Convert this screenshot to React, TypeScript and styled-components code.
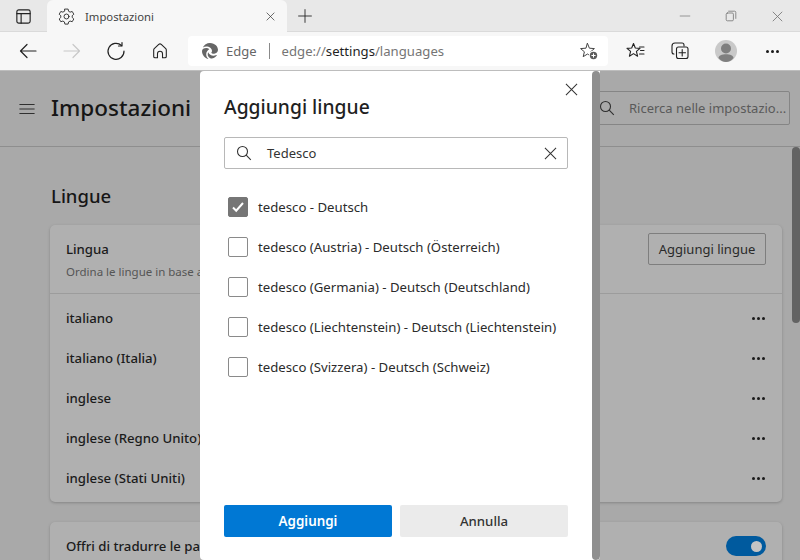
import React from 'react';
import styled, { createGlobalStyle } from 'styled-components';
import { FaEdge } from 'react-icons/fa6';

const FONT = '"Noto Sans", "Open Sans", sans-serif';

const GlobalStyle = createGlobalStyle`
  html, body {
    margin: 0;
    padding: 0;
    width: 800px;
    height: 560px;
    overflow: hidden;
    font-family: ${FONT};
    color: #1f1f1f;
  }
  * {
    box-sizing: border-box;
  }
`;

const Browser = styled.div`
  width: 800px;
  height: 560px;
  display: flex;
  flex-direction: column;
  overflow: hidden;
`;

const TabStrip = styled.div`
  height: 32px;
  flex: none;
  background: #e8e8e8;
  box-shadow: inset 0 -1px 0 #dadada;
  display: flex;
  align-items: flex-end;
`;

const TabToggle = styled.div`
  width: 47px;
  height: 32px;
  display: flex;
  align-items: center;
  justify-content: center;
`;

const Tab = styled.div`
  width: 240px;
  height: 32px;
  background: #f7f7f7;
  border-radius: 6px 6px 0 0;
  display: flex;
  align-items: center;
  padding: 0 12px 0 10px;
  gap: 9px;
`;

const TabTitle = styled.span`
  flex: 1;
  font-size: 11.3px;
  color: #444;
`;

const NewTab = styled.div`
  width: 36px;
  height: 32px;
  display: flex;
  align-items: center;
  justify-content: center;
`;

const WindowControls = styled.div`
  margin-left: auto;
  height: 32px;
  display: flex;
  align-items: center;
`;

const WindowButton = styled.div`
  width: 46px;
  display: flex;
  justify-content: center;
`;

const Toolbar = styled.div`
  height: 39px;
  flex: none;
  background: #f7f7f7;
  border-bottom: 1px solid #bdbdbd;
  display: flex;
  align-items: center;
  padding-left: 6px;
`;

const ToolButton = styled.div<{ $width?: number }>`
  width: ${({ $width }) => $width ?? 44}px;
  height: 30px;
  flex: none;
  display: flex;
  align-items: center;
  justify-content: center;
`;

const AddressBar = styled.div`
  width: 420px;
  height: 30px;
  margin: 0 6px;
  flex: none;
  background: #fff;
  border-radius: 4px;
  display: flex;
  align-items: center;
  padding: 0 9px 0 14px;
  color: #666;
`;

const SiteName = styled.span`
  font-size: 13px;
  color: #666;
  margin-left: 8px;
`;

const Divider = styled.span`
  width: 1px;
  height: 16px;
  background: #8a8a8a;
  margin: 0 12px 0 12px;
`;

const Url = styled.span`
  flex: 1;
  font-size: 13.15px;
  color: #757575;
  b {
    font-weight: 400;
    color: #1f1f1f;
  }
`;

const Page = styled.div`
  position: relative;
  flex: 1;
  background: #a9a9a9;
  overflow: hidden;
`;

const PageHeader = styled.header`
  height: 76px;
  border-bottom: 1px solid #8e8e8e;
  display: flex;
  align-items: center;
  padding: 0 10px 0 18px;
`;

const PageTitle = styled.h1`
  margin: 0 0 3px 15px;
  font-size: 22.5px;
  font-weight: 500;
  color: #161616;
`;

const SettingsSearch = styled.div`
  margin: 0 0 2px auto;
  width: 192px;
  height: 34px;
  border: 1px solid #858585;
  border-radius: 2px;
  display: flex;
  align-items: center;
  gap: 14px;
  font-size: 13px;
  color: #5a5a5a;
  white-space: nowrap;
`;

const Content = styled.main`
  padding: 35px 18px 0 50px;
`;

const SectionTitle = styled.h2`
  margin: 0 0 15px 1px;
  font-size: 18.5px;
  line-height: 28px;
  font-weight: 500;
  color: #161616;
`;

const Card = styled.section`
  background: #b0b0b0;
  border-radius: 5px;
  box-shadow: 0 1px 3px rgba(0, 0, 0, 0.22);
  margin-bottom: 20px;
`;

const CardHead = styled.div`
  height: 69px;
  border-bottom: 1px solid #9c9c9c;
  display: flex;
  align-items: flex-start;
  justify-content: space-between;
  padding: 8px 16px 0;
`;

const CardHeadText = styled.div`
  padding-top: 6px;
`;

const CardTitle = styled.div`
  font-size: 13.2px;
  line-height: 20px;
  font-weight: 500;
  color: #1b1b1b;
`;

const CardHint = styled.div`
  font-size: 11.5px;
  line-height: 16px;
  margin-top: 5px;
  color: #555;
`;

const OutlineButton = styled.div`
  width: 118px;
  height: 32px;
  border: 1px solid #7e7e7e;
  border-radius: 2px;
  font-size: 13px;
  line-height: 30px;
  text-align: center;
  color: #2a2a2a;
`;

const LangList = styled.div`
  padding: 4px 0;
`;

const LangRow = styled.div`
  height: 40px;
  display: flex;
  align-items: center;
  justify-content: space-between;
  padding: 0 17px 0 16px;
  font-size: 13.2px;
  font-weight: 500;
  color: #1b1b1b;
`;

const Dots = styled.span`
  display: flex;
  gap: 2px;
  i {
    width: 3px;
    height: 3px;
    border-radius: 50%;
    background: #1a1a1a;
  }
`;

const ToggleRow = styled.div`
  height: 60px;
  display: flex;
  align-items: flex-start;
  justify-content: space-between;
  padding: 14px 16px;
  font-size: 13.2px;
  line-height: 20px;
  font-weight: 500;
  color: #1b1b1b;
`;

const Toggle = styled.span`
  width: 40px;
  height: 20px;
  border-radius: 10px;
  background: #005a9e;
  display: flex;
  align-items: center;
  justify-content: flex-end;
  padding-right: 4px;
  &::after {
    content: '';
    width: 11px;
    height: 11px;
    border-radius: 50%;
    background: #c4c4c4;
  }
`;

const Dialog = styled.div`
  position: absolute;
  left: 200px;
  top: 0;
  width: 400px;
  height: 489px;
  background: #fff;
  border-radius: 4px 0 4px 4px;
  display: flex;
  overflow: hidden;
`;

const DialogBody = styled.div`
  position: relative;
  width: 392px;
  display: flex;
  flex-direction: column;
  padding: 22px 24px 23px;
`;

const DialogScroll = styled.div`
  width: 8px;
  background: #8f8f8f;
  border-radius: 4px;
`;

const DialogClose = styled.div`
  position: absolute;
  top: 12px;
  right: 14px;
  display: flex;
`;

const DialogTitle = styled.h2`
  margin: 0;
  font-size: 19.3px;
  line-height: 28px;
  font-weight: 500;
  color: #1f1f1f;
`;

const DialogSearch = styled.div`
  margin-top: 16px;
  height: 32px;
  border: 1px solid #b8b8b8;
  border-radius: 2px;
  display: flex;
  align-items: center;
  padding: 0 10px 0 11px;
`;

const SearchText = styled.span`
  flex: 1;
  margin-left: 15px;
  font-size: 13px;
  color: #333;
`;

const OptionList = styled.div`
  margin-top: 18px;
  flex: 1;
`;

const Option = styled.div`
  height: 40px;
  display: flex;
  align-items: center;
  padding-left: 4px;
  gap: 10px;
  font-size: 13.2px;
  color: #2b2b2b;
`;

const Check = styled.span<{ $checked?: boolean }>`
  width: 20px;
  height: 20px;
  border-radius: 2px;
  border: 1px solid ${({ $checked }) => ($checked ? '#767676' : '#8a8a8a')};
  background: ${({ $checked }) => ($checked ? '#767676' : '#fff')};
  display: flex;
  align-items: center;
  justify-content: center;
`;

const DialogActions = styled.div`
  display: grid;
  grid-template-columns: 1fr 1fr;
  gap: 8px;
`;

const ActionButton = styled.div<{ $primary?: boolean }>`
  height: 32px;
  border-radius: 2px;
  font-size: ${({ $primary }) => ($primary ? 13.4 : 13.2)}px;
  line-height: 32px;
  text-align: center;
  font-weight: ${({ $primary }) => ($primary ? 600 : 500)};
  background: ${({ $primary }) => ($primary ? '#0078d4' : '#ebebeb')};
  color: ${({ $primary }) => ($primary ? '#fff' : '#333')};
`;

const PageScrollThumb = styled.div`
  position: absolute;
  right: 0;
  top: 76px;
  width: 8px;
  height: 176px;
  border-radius: 4px;
  background: #636363;
`;

const Stroke: React.FC<{ size?: number; color?: string; width?: number; children: React.ReactNode }> = ({
  size = 20,
  color = '#222',
  width = 1.2,
  children
}) => (
  <svg width={size} height={size} viewBox="0 0 20 20" fill="none" stroke={color} strokeWidth={width} strokeLinecap="round" strokeLinejoin="round">
    {children}
  </svg>
);

const CrossIcon: React.FC<{ size?: number; color?: string }> = ({ size = 14, color = '#333' }) => (
  <svg width={size} height={size} viewBox="0 0 14 14" fill="none" stroke={color} strokeWidth={1.1}>
    <path d="M1 1l12 12M13 1L1 13" />
  </svg>
);

const SearchIcon: React.FC<{ color?: string }> = ({ color = '#333' }) => (
  <svg width={16} height={16} viewBox="0 0 16 16" fill="none" stroke={color} strokeWidth={1.1}>
    <circle cx="6.5" cy="6.5" r="5" />
    <path d="M10.2 10.2l4.6 4.6" />
  </svg>
);

const languages = ['italiano', 'italiano (Italia)', 'inglese', 'inglese (Regno Unito)', 'inglese (Stati Uniti)'];

const options = [
  'tedesco - Deutsch',
  'tedesco (Austria) - Deutsch (Österreich)',
  'tedesco (Germania) - Deutsch (Deutschland)',
  'tedesco (Liechtenstein) - Deutsch (Liechtenstein)',
  'tedesco (Svizzera) - Deutsch (Schweiz)'
];

const App: React.FC = () => (
  <Browser>
    <GlobalStyle />
    <TabStrip>
      <TabToggle>
        <Stroke size={19} width={1.2}>
          <rect x="3" y="3" width="14" height="14" rx="2" />
          <path d="M3 7h14M7.5 7v10" />
        </Stroke>
      </TabToggle>
      <Tab>
        <Stroke size={19} color="#333" width={1}>
          <circle cx="10" cy="10" r="2.6" />
          <path d="M8.3 2.2h3.4l.5 2.3 1.6.9 2.2-.7 1.7 2.9-1.7 1.6v1.8l1.7 1.6-1.7 2.9-2.2-.7-1.6.9-.5 2.3H8.3l-.5-2.3-1.6-.9-2.2.7-1.7-2.9 1.7-1.6V9.2L2.3 7.6 4 4.7l2.2.7 1.6-.9z" />
        </Stroke>
        <TabTitle>Impostazioni</TabTitle>
        <CrossIcon size={9} />
      </Tab>
      <NewTab>
        <Stroke size={16} width={1.1}>
          <path d="M10 2v16M2 10h16" />
        </Stroke>
      </NewTab>
      <WindowControls>
        <WindowButton>
          <Stroke size={12} color="#777" width={1.2}>
            <path d="M2 10h16" />
          </Stroke>
        </WindowButton>
        <WindowButton>
          <Stroke size={12} color="#777" width={1.4}>
            <rect x="2" y="5" width="12" height="13" rx="2" />
            <path d="M6 2h10a2 2 0 0 1 2 2v10" />
          </Stroke>
        </WindowButton>
        <WindowButton>
          <CrossIcon size={11} color="#777" />
        </WindowButton>
      </WindowControls>
    </TabStrip>
    <Toolbar>
      <ToolButton>
        <Stroke size={20} width={1.2}>
          <path d="M18 10H2.5M9 3.5L2.5 10 9 16.5" />
        </Stroke>
      </ToolButton>
      <ToolButton>
        <Stroke size={20} color="#c8c8c8" width={1.2}>
          <path d="M2 10h15.5M11 3.5l6.5 6.5-6.500 6.500" />
        </Stroke>
      </ToolButton>
      <ToolButton>
        <Stroke size={20} width={1.2}>
          <path d="M15.5 4.5A8 8 0 1 0 18 10" />
          <path d="M16 1.5V5h-3.5" />
        </Stroke>
      </ToolButton>
      <ToolButton>
        <Stroke size={18} width={1.2}>
          <path d="M8.6 2.700a2 2 0 0 1 2.800 0l5 4.700c.4.400.600.900.600 1.400V16a1.500 1.500 0 0 1-1.500 1.500h-2.700V13a2.800 2.800 0 0 0-5.600 0v4.500H4.500A1.500 1.500 0 0 1 3 16V8.800c0-.5.200-1 .600-1.400z" />
        </Stroke>
      </ToolButton>
      <AddressBar>
        <FaEdge size={16} />
        <SiteName>Edge</SiteName>
        <Divider />
        <Url>
          edge://<b>settings</b>/languages
        </Url>
        <Stroke size={20} color="#444" width={1}>
          <path d="M8.5 2.500l1.900 4.700 5 .4-3.800 3.200 1.200 4.900-4.300-2.700-4.300 2.700 1.200-4.900-3.800-3.200 5-.4z" />
          <circle cx="14.5" cy="14.5" r="4.8" fill="#fff" stroke="none" />
          <circle cx="14.5" cy="14.5" r="3.7" fill="#5a5a5a" stroke="none" />
          <path d="M14.5 12.800v3.400M12.800 14.500h3.400" stroke="#fff" />
        </Stroke>
      </AddressBar>
      <ToolButton>
        <Stroke size={20} color="#222" width={1.1}>
          <path d="M7.5 2.500l1.800 4.500 4.700.4-3.600 3 1.200 4.800-4.100-2.600-4.100 2.600 1.200-4.800-3.600-3L5.700 7z" />
          <path d="M13.5 6H18M14.5 9.500H18M13.500 13H18" />
        </Stroke>
      </ToolButton>
      <ToolButton>
        <Stroke size={20} color="#222" width={1.1}>
          <path d="M14 5V4a2 2 0 0 0-2-2H5a3 3 0 0 0-3 3v6a2 2 0 0 0 2 2" />
          <rect x="6.5" y="6" width="11.5" height="11.5" rx="2" />
          <path d="M12.2 8.500v6.500M9 11.800h6.500" />
        </Stroke>
      </ToolButton>
      <ToolButton $width={48}>
        <svg width={22} height={22} viewBox="0 0 22 22">
          <circle cx="11" cy="11" r="11" fill="#c9c9c9" />
          <circle cx="11" cy="8.5" r="5" fill="#7f7f7f" />
          <path d="M3.5 18c0-2.500 3.300-3.800 7.500-3.800s7.500 1.300 7.500 3.800c-2 2.500-4.700 4-7.500 4s-5.500-1.500-7.500-4z" fill="#7f7f7f" />
        </svg>
      </ToolButton>
      <ToolButton>
        <Dots>
          <i />
          <i />
          <i />
        </Dots>
      </ToolButton>
    </Toolbar>
    <Page>
      <PageHeader>
        <Stroke size={18} color="#222" width={1}>
          <path d="M2 5h16M2 10h16M2 15h16" />
        </Stroke>
        <PageTitle>Impostazioni</PageTitle>
        <SettingsSearch>
          <SearchIcon color="#2f2f2f" />
          Ricerca nelle impostazio...
        </SettingsSearch>
      </PageHeader>
      <Content>
        <SectionTitle>Lingue</SectionTitle>
        <Card>
          <CardHead>
            <CardHeadText>
              <CardTitle>Lingua</CardTitle>
              <CardHint>Ordina le lingue in base alle tue preferenze</CardHint>
            </CardHeadText>
            <OutlineButton>Aggiungi lingue</OutlineButton>
          </CardHead>
          <LangList>
            {languages.map((lang) => (
              <LangRow key={lang}>
                {lang}
                <Dots>
                  <i />
                  <i />
                  <i />
                </Dots>
              </LangRow>
            ))}
          </LangList>
        </Card>
        <Card>
          <ToggleRow>
            Offri di tradurre le pagine
            <Toggle />
          </ToggleRow>
        </Card>
      </Content>
      <PageScrollThumb />
      <Dialog>
        <DialogBody>
          <DialogClose>
            <CrossIcon size={13} />
          </DialogClose>
          <DialogTitle>Aggiungi lingue</DialogTitle>
          <DialogSearch>
            <SearchIcon />
            <SearchText>Tedesco</SearchText>
            <CrossIcon size={13} />
          </DialogSearch>
          <OptionList>
            {options.map((opt, i) => (
              <Option key={opt}>
                <Check $checked={i === 0}>
                  {i === 0 && (
                    <svg width={14} height={14} viewBox="0 0 14 14" fill="none" stroke="#fff" strokeWidth={2}>
                      <path d="M2 7.5l3.2 3.200L12 3" />
                    </svg>
                  )}
                </Check>
                {opt}
              </Option>
            ))}
          </OptionList>
          <DialogActions>
            <ActionButton $primary>Aggiungi</ActionButton>
            <ActionButton>Annulla</ActionButton>
          </DialogActions>
        </DialogBody>
        <DialogScroll />
      </Dialog>
    </Page>
  </Browser>
);

export default App;
